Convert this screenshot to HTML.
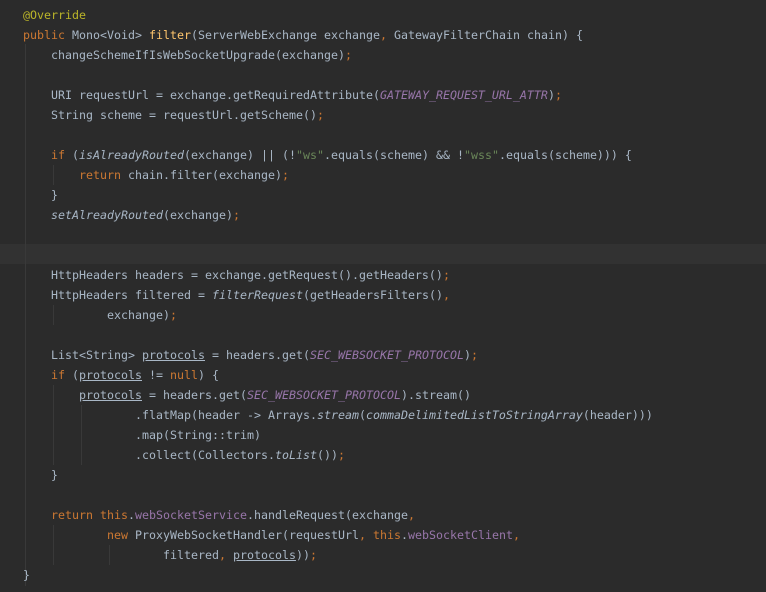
<!DOCTYPE html>
<html><head><meta charset="utf-8"><style>
html,body{margin:0;padding:0;background:#2b2b2b;width:766px;height:592px;overflow:hidden}
.hl{position:absolute;left:0;top:244px;width:766px;height:20px;background:#323232}
.g{position:absolute;width:1px;background:#393939}
pre{position:absolute;left:23px;top:5px;margin:0;font-family:"DejaVu Sans Mono","Liberation Mono",monospace;font-size:11.63px;line-height:20px;color:#a9b7c6;white-space:pre}
.k{color:#cc7832}.a{color:#bbb529}.f{color:#ffc66d}.p{color:#9876aa}.s{color:#6a8759}.i{font-style:italic}.u{text-decoration:underline}
</style></head><body>
<div class="hl"></div>
<div class="g" style="left:25px;top:44px;height:542px"></div>
<div class="g" style="left:53px;top:165px;height:20px"></div>
<div class="g" style="left:53px;top:305px;height:20px"></div>
<div class="g" style="left:53px;top:385px;height:80px"></div>
<div class="g" style="left:81px;top:405px;height:60px"></div>
<div class="g" style="left:53px;top:525px;height:40px"></div>
<div class="g" style="left:109px;top:545px;height:20px"></div>
<pre><span class="a">@Override</span>
<span class="k">public </span>Mono&lt;Void&gt; <span class="f">filter</span>(ServerWebExchange exchange<span class="k">, </span>GatewayFilterChain chain) {
    changeSchemeIfIsWebSocketUpgrade(exchange)<span class="k">;</span>

    URI requestUrl = exchange.getRequiredAttribute(<span class="p i">GATEWAY_REQUEST_URL_ATTR</span>)<span class="k">;</span>
    String scheme = requestUrl.getScheme()<span class="k">;</span>

    <span class="k">if </span>(<span class="i">isAlreadyRouted</span>(exchange) || (!<span class="s">"ws"</span>.equals(scheme) &amp;&amp; !<span class="s">"wss"</span>.equals(scheme))) {
        <span class="k">return </span>chain.filter(exchange)<span class="k">;</span>
    }
    <span class="i">setAlreadyRouted</span>(exchange)<span class="k">;</span>


    HttpHeaders headers = exchange.getRequest().getHeaders()<span class="k">;</span>
    HttpHeaders filtered = <span class="i">filterRequest</span>(getHeadersFilters()<span class="k">,</span>
            exchange)<span class="k">;</span>

    List&lt;String&gt; <span class="u">protocols</span> = headers.get(<span class="p i">SEC_WEBSOCKET_PROTOCOL</span>)<span class="k">;</span>
    <span class="k">if </span>(<span class="u">protocols</span> != <span class="k">null</span>) {
        <span class="u">protocols</span> = headers.get(<span class="p i">SEC_WEBSOCKET_PROTOCOL</span>).stream()
                .flatMap(header -&gt; Arrays.<span class="i">stream</span>(<span class="i">commaDelimitedListToStringArray</span>(header)))
                .map(String::trim)
                .collect(Collectors.<span class="i">toList</span>())<span class="k">;</span>
    }

    <span class="k">return this</span>.<span class="p">webSocketService</span>.handleRequest(exchange<span class="k">,</span>
            <span class="k">new </span>ProxyWebSocketHandler(requestUrl<span class="k">, this</span>.<span class="p">webSocketClient</span><span class="k">,</span>
                    filtered<span class="k">, </span><span class="u">protocols</span>))<span class="k">;</span>
}</pre>
</body></html>
